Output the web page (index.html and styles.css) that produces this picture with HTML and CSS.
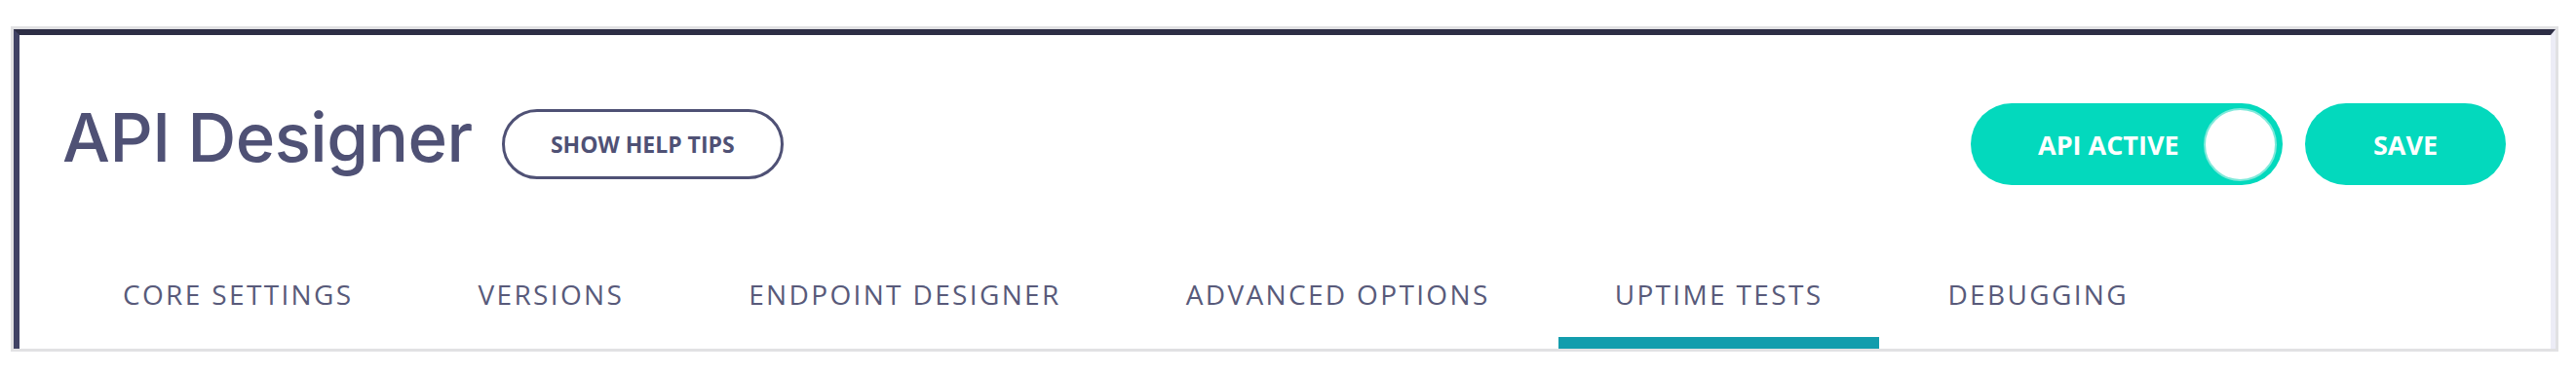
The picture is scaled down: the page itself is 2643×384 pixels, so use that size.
FILE: index.html
```html
<!DOCTYPE html>
<html lang="en">
<head>
    <meta charset="UTF-8">
    <title>API Designer</title>
    <link rel="stylesheet" href="styles.css">
</head>
<body>
    <div class="frame">
        <div class="panel">
            <header class="header">
                <h1 class="title">API Designer</h1>
                <button class="help-button">SHOW HELP TIPS</button>

                <div class="actions">
                    <div class="toggle">
                        <span class="toggle-label">API ACTIVE</span>
                        <span class="knob"></span>
                    </div>
                    <button class="save-button">SAVE</button>
                </div>
            </header>

            <nav class="tabs">
                <a class="tab">CORE SETTINGS</a>
                <a class="tab">VERSIONS</a>
                <a class="tab">ENDPOINT DESIGNER</a>
                <a class="tab">ADVANCED OPTIONS</a>
                <a class="tab active">UPTIME TESTS</a>
                <a class="tab">DEBUGGING</a>
            </nav>
        </div>
    </div>
</body>
</html>
```

FILE: styles.css
```css
* {
    margin: 0;
    padding: 0;
    box-sizing: border-box;
}

body {
    background: white;
    font-family: "Open Sans", "Liberation Sans", sans-serif;
}

.frame {
    margin: 27px 0 0 11px;
    width: 2614px;
    height: 334px;
    border: 3px solid #e1e1e3;
}

.panel {
    height: 100%;
    border-top: 6px solid #2d2e45;
    border-left: 6px solid #404264;
    border-right: 5px solid #ececf6;
}

.header {
    display: flex;
    align-items: center;
    height: 154px;
    padding: 70px 46px 0 44px;
}

.title {
    font-family: Inter, "Open Sans", sans-serif;
    font-weight: 500;
    font-size: 69px;
    color: #4f5175;
    letter-spacing: -0.5px;
    margin-bottom: 15px;
}

.help-button {
    margin-left: 30px;
    width: 289px;
    height: 72px;
    border: 3px solid #4f5175;
    border-radius: 36px;
    background: white;
    color: #4f5175;
    font-family: "Open Sans", sans-serif;
    font-weight: 700;
    font-size: 23px;
}

.actions {
    margin-left: auto;
    display: flex;
    align-items: center;
    gap: 23px;
}

.toggle {
    display: flex;
    align-items: center;
    width: 320px;
    height: 84px;
    padding: 0 6px 0 69px;
    border-radius: 42px;
    background: #03d9bd;
}

.toggle-label {
    color: white;
    font-weight: 700;
    font-size: 27px;
}

.knob {
    margin-left: auto;
    width: 75px;
    height: 75px;
    border-radius: 50%;
    background: white;
    border: 2px solid #7fe9da;
}

.save-button {
    width: 206px;
    height: 84px;
    border: none;
    border-radius: 42px;
    background: #03d9bd;
    color: white;
    font-family: "Open Sans", sans-serif;
    font-weight: 700;
    font-size: 27px;
}

.tabs {
    display: flex;
    gap: 12px;
    margin-top: 63px;
    padding-left: 48px;
}

.tab {
    padding: 30px 58px 25px;
    line-height: 38px;
    font-size: 28px;
    letter-spacing: 2.35px;
    color: #585a7a;
    border-bottom: 12px solid transparent;
}

.tab.active {
    border-bottom-color: #139dad;
}
```
